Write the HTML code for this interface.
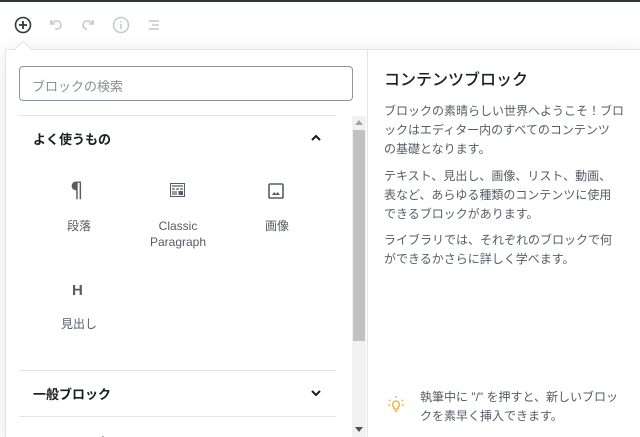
<!DOCTYPE html>
<html><head><meta charset="utf-8"><style>
*{margin:0;padding:0;box-sizing:border-box}
html,body{width:640px;height:437px;overflow:hidden}
body{background:#fff;font-family:"Liberation Sans","Noto Sans CJK JP",sans-serif;position:relative}
.top{position:absolute;left:0;top:0;width:640px;height:2px;background:#32373c}
.tb{position:absolute;top:15px}
.pop{position:absolute;left:5px;top:49px;width:640px;height:400px;border:1px solid #e2e4e7;box-shadow:0 3px 20px rgba(25,30,35,.1);background:#fff}
.arrow{position:absolute;left:17px;top:43px;width:12px;height:12px;background:#fff;border-left:1px solid #e2e4e7;border-top:1px solid #e2e4e7;transform:rotate(45deg)}
.search{position:absolute;left:19px;top:66px;width:334px;height:35px;border:1px solid #8d96a0;border-radius:4px;font-size:13px;color:#8a8f94;padding:9px 12px}
.hr{position:absolute;left:19px;width:317px;height:1px;background:#e2e4e7}
.hd{position:absolute;left:33px;font-size:13px;font-weight:bold;color:#191e23}
.sb{position:absolute;left:352px;top:116px;width:14px;height:321px;background:#f1f1f1}
.thumb{position:absolute;left:353px;top:130px;width:12px;height:211px;background:#c1c1c1}
.lbl{position:absolute;font-size:12px;color:#555d66;text-align:center;width:90px;line-height:16px}
.ic{position:absolute}
.rp{position:absolute;left:367px;top:49px;width:1px;height:390px;background:#e2e4e7}
.title{position:absolute;left:384px;top:66px;font-size:16px;color:#191e23;font-weight:500}
.p{position:absolute;left:384px;font-size:12px;line-height:19px;color:#555d66;white-space:nowrap}
</style></head><body>
<div class="top"></div>
<div class="pop"></div>
<div class="arrow"></div>
<svg class="tb" style="left:13px" width="20" height="20" viewBox="0 0 20 20"><circle cx="10" cy="10" r="7.5" fill="none" stroke="#32373c" stroke-width="1.6"/><path d="M10 6v8M6 10h8" stroke="#32373c" stroke-width="1.8"/></svg>
<svg class="tb" style="left:46px" width="20" height="20" viewBox="0 0 20 20"><path d="M5 5v4h4M5.5 8.5C7 6.5 9 6 11 6a4 4 0 010 8H9" fill="none" stroke="#c5c8cc" stroke-width="1.6"/></svg>
<svg class="tb" style="left:78px" width="20" height="20" viewBox="0 0 20 20"><path d="M15 5v4h-4M14.5 8.5C13 6.5 11 6 9 6a4 4 0 000 8" fill="none" stroke="#c5c8cc" stroke-width="1.6"/></svg>
<svg class="tb" style="left:111px" width="20" height="20" viewBox="0 0 20 20"><circle cx="10" cy="10" r="7.5" fill="none" stroke="#c5c8cc" stroke-width="1.5"/><path d="M10 9v5M10 6v1.5" stroke="#c5c8cc" stroke-width="1.6"/></svg>
<svg class="tb" style="left:144px" width="20" height="20" viewBox="0 0 20 20"><path d="M5 6h10M8 10h7M5 14h10" stroke="#c5c8cc" stroke-width="1.5"/></svg>
<div class="search">ブロックの検索</div>
<div class="hr" style="top:115px"></div>
<div class="hd" style="top:129px">よく使うもの</div>
<svg class="ic" style="left:309px;top:131px" width="14" height="14" viewBox="0 0 14 14"><path d="M3 9l4-4 4 4" fill="none" stroke="#191e23" stroke-width="2"/></svg>
<div class="sb"></div><div class="thumb"></div>
<svg class="ic" style="left:355px;top:120px" width="8" height="5"><path d="M0 5L4 0 8 5z" fill="#a3a3a3"/></svg>
<svg class="ic" style="left:355px;top:427px" width="8" height="5"><path d="M0 0L4 5 8 0z" fill="#505050"/></svg>
<div class="ic" style="left:70px;top:178px;font-size:21px;color:#555d66;font-family:'DejaVu Sans',sans-serif">¶</div>
<svg class="ic" style="left:170px;top:183px" width="15" height="14" viewBox="0 0 15 14"><rect x="0.5" y="0.5" width="14" height="13" fill="none" stroke="#555d66"/><path d="M2 3h11M2 6h3M6 6h3M10 6h3M2 9h5M2 11h5" stroke="#555d66" stroke-width="1.2"/><rect x="8.5" y="8" width="4.5" height="4" fill="#555d66"/></svg>
<svg class="ic" style="left:268px;top:183px" width="16" height="16" viewBox="0 0 16 16"><rect x="1" y="1" width="14" height="14" rx="1" fill="none" stroke="#555d66" stroke-width="1.6"/><path d="M4 12l2-3 2 2 1.5-2 2.5 3z" fill="#555d66"/></svg>
<div class="lbl" style="left:34px;top:218px">段落</div>
<div class="lbl" style="left:133px;top:218px">Classic<br>Paragraph</div>
<div class="lbl" style="left:232px;top:218px">画像</div>
<div class="ic" style="left:72px;top:282px;font-size:15px;font-weight:bold;color:#555d66">H</div>
<div class="lbl" style="left:34px;top:316px">見出し</div>
<div class="hr" style="top:370px"></div>
<div class="hd" style="top:384px">一般ブロック</div>
<svg class="ic" style="left:309px;top:386px" width="14" height="14" viewBox="0 0 14 14"><path d="M3 5l4 4 4-4" fill="none" stroke="#191e23" stroke-width="2"/></svg>
<div class="hr" style="top:416px"></div>
<div class="hd" style="top:432px">フォーマット</div>
<div class="rp"></div>
<div class="title">コンテンツブロック</div>
<div class="p" style="top:102px">ブロックの素晴らしい世界へようこそ！ブロ<br>ックはエディター内のすべてのコンテンツ<br>の基礎となります。</div>
<div class="p" style="top:167px">テキスト、見出し、画像、リスト、動画、<br>表など、あらゆる種類のコンテンツに使用<br>できるブロックがあります。</div>
<div class="p" style="top:231px">ライブラリでは、それぞれのブロックで何<br>ができるかさらに詳しく学べます。</div>
<svg class="ic" style="left:386px;top:394px" width="20" height="20" viewBox="0 0 20 20"><path d="M10 7a3.5 3.5 0 00-2 6.3V15h4v-1.7A3.5 3.5 0 0010 7zM8.5 17h3" fill="none" stroke="#f0b849" stroke-width="1.5"/><path d="M10 2v2M3 6l1.5 1M17 6l-1.5 1M2 11h2M16 11h2" stroke="#f0b849" stroke-width="1.4"/></svg>
<div class="p" style="top:388px;left:420px">執筆中に "/" を押すと、新しいブロッ<br>クを素早く挿入できます。</div>
</body></html>
